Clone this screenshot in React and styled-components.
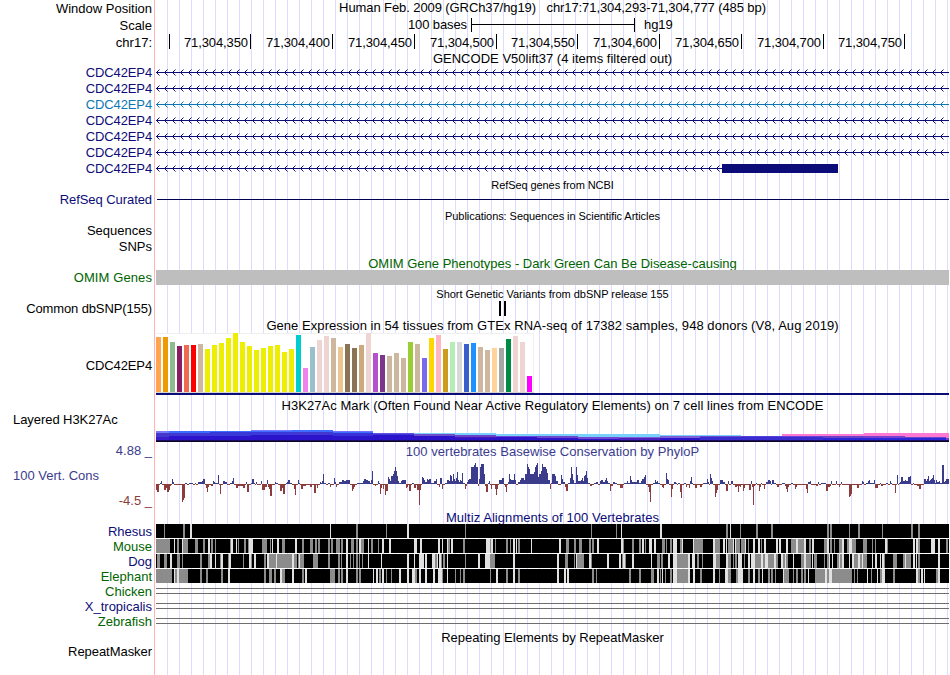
import React from 'react';
import styled, { createGlobalStyle } from 'styled-components';

const GlobalStyle = createGlobalStyle`
    body {
        margin: 0;
        background: #fff;
    }
`;

const navy = '#0c0c78';
const black = '#000';
const green = '#006400';
const consUp = '#3c3c8c';
const consDown = '#8c3c3c';

const Browser = styled.main`
    width: 949px;
    height: 675px;
    overflow: hidden;
    font-family: 'Liberation Sans', Arial, sans-serif;
    font-size: 13px;
    line-height: 15px;
    color: #000;
    background:
        linear-gradient(#ffb4b4, #ffb4b4) 154px 0 / 1px 100% no-repeat,
        linear-gradient(#fff, #fff) 0 0 / 156px 100% no-repeat,
        repeating-linear-gradient(to right, transparent 0 11px, #dcdcff 11px 12px);
`;

const Row = styled.div`
    display: grid;
    grid-template-columns: 156px 793px;
    height: ${(props) => props.$h}px;
`;

const Side = styled.div`
    display: flex;
    flex-direction: column;
`;

const Label = styled.div`
    margin-top: ${(props) => props.$top || 0}px;
    padding: ${(props) => (props.$left ? '0 0 0 13px' : '0 4px 0 0')};
    text-align: ${(props) => (props.$left ? 'left' : 'right')};
    letter-spacing: ${(props) => props.$track || 0}px;
    color: ${(props) => props.$color || black};
    white-space: pre;
`;

const Title = styled.div`
    margin-top: ${(props) => props.$top || 0}px;
    font-size: ${(props) => (props.$small ? 11 : 13)}px;
    letter-spacing: ${(props) => props.$track || 0}px;
    text-align: center;
    color: ${(props) => props.$color || black};
    white-space: pre;
`;

const Plot = styled.svg`
    display: block;
    width: 793px;
    height: ${(props) => props.$h}px;
    shape-rendering: crispEdges;
`;

const ScaleBar = styled.div`
    display: grid;
    grid-template-columns: 315px 164px 1fr;
    padding-top: 1px;
    height: 14px;
`;

const ScaleText = styled.span`
    text-align: ${(props) => props.$align};
    padding: ${(props) => (props.$align === 'right' ? '0 4px 0 0' : '0 0 0 9px')};
    letter-spacing: -0.1px;
    line-height: 13px;
`;

const ScaleLine = styled.div`
    border: solid #000;
    border-width: 0 1px;
    background: linear-gradient(#000, #000) 0 6px / 100% 1px no-repeat;
`;

const Ruler = styled.div`
    display: grid;
    grid-template-columns: 14px 81px 82px 82px 82px 81px 82px 82px 82px 81px;
    padding-top: 1px;
`;

const Tick = styled.span`
    height: 15px;
    border-right: 1px solid #000;
    text-align: right;
    padding-right: 2px;
    letter-spacing: -0.1px;
    line-height: 17px;
`;

const positions = ['', '71,304,350', '71,304,400', '71,304,450', '71,304,500', '71,304,550', '71,304,600', '71,304,650', '71,304,700', '71,304,750'];

const genes = [{ color: navy }, { color: navy }, { color: '#0c78b4' }, { color: navy }, { color: navy }, { color: navy }, { color: navy, end: 566 }];

const Gene = ({ color, end = 793 }) => {
    const arrows = [];
    for (let x = 1; x < end; x += 8) {
        arrows.push(x);
    }
    return (
        <Row $h={16}>
            <Label $color={color} $track={-0.12}>CDC42EP4</Label>
            <Plot $h={16} viewBox='0 0 793 16' fill={color}>
                <rect x='0' y='7' width={end} height='1' />
                {arrows.map((x) => (
                    <g key={x}>
                        <path d={`M${x} 6h1v1h-1zM${x + 1} 5h1v1h-1zM${x} 8h1v1h-1zM${x + 1} 9h1v1h-1z`} />
                        <path opacity='0.5' d={`M${x + 2} 4h1v1h-1zM${x + 2} 10h1v1h-1z`} />
                    </g>
                ))}
                {end < 793 && <rect x='566' y='3' width='116' height='9' />}
            </Plot>
        </Row>
    );
};

// one entry per tissue: bar height, colour
const tissues = [
    [55, '#ffa54f'], [55, '#ee9a00'], [50, '#8fbc8f'], [46, '#8b1c62'], [47, '#ee6a50'], [47, '#ff0000'], [48, '#cdb79e'],
    [43, '#eeee00'], [47, '#eeee00'], [49, '#eeee00'], [54, '#eeee00'], [59, '#eeee00'], [50, '#eeee00'], [46, '#eeee00'],
    [42, '#eeee00'], [44, '#eeee00'], [46, '#eeee00'], [47, '#eeee00'], [40, '#eeee00'], [43, '#eeee00'],
    [57, '#00cdcd'], [24, '#ee82ee'], [45, '#9ac0cd'], [52, '#eed5d2'], [56, '#eed5d2'], [54, '#cdb79e'], [45, '#eec591'],
    [48, '#8b7355'], [44, '#8b7355'], [47, '#cdaa7d'], [59, '#eed5d2'], [39, '#b452cd'], [37, '#7a378b'], [36, '#cdb79e'],
    [39, '#cdb79e'], [34, '#cdb79e'], [50, '#9acd32'], [48, '#cdb79e'], [34, '#7a67ee'], [54, '#ffd700'], [57, '#ffb6c1'],
    [43, '#cd9b1d'], [50, '#b4eeb4'], [50, '#d9d9d9'], [48, '#3a5fcd'], [49, '#1e90ff'], [45, '#cdb79e'], [42, '#cdb79e'],
    [44, '#ffd39b'], [44, '#a6a6a6'], [53, '#008b45'], [56, '#eed5d2'], [50, '#eed5d2'], [16, '#ff00ff'],
];

// [start, [top, colour], ...] overlaid signal of the cell lines, each step runs to the next start
const h3k27ac = [
    [156, [18, '#7878f8'], [20, '#4638cc'], [24, '#3a1ccc']],
    [169, [18, '#3c6cff'], [20, '#4038d0'], [23, '#2c14cc']],
    [210, [18, '#3c6cff'], [19, '#3838d8'], [23, '#2c14cc']],
    [251, [17, '#7878ff'], [18, '#3c6cff'], [19, '#3a38d8'], [22, '#2c14cc']],
    [292, [17, '#3c6cff'], [19, '#4038d0'], [22, '#2c14cc']],
    [333, [18, '#7070ff'], [19, '#3c6cff'], [20, '#3a30d8'], [23, '#2c14cc']],
    [373, [20, '#6050e8'], [21, '#4038d0'], [22, '#2c14cc']],
    [414, [20, '#78d0ff'], [21, '#7050c8'], [23, '#2c14cc']],
    [455, [20, '#78d0ff'], [22, '#6a44c8'], [24, '#4a18b8'], [25, '#2c14cc']],
    [496, [21, '#78d0ff'], [23, '#7048d0'], [24, '#2c14cc']],
    [537, [21, '#78d0ff'], [23, '#7048d0'], [25, '#2c14cc']],
    [578, [21, '#78d0ff'], [24, '#7048d0'], [26, '#2c14cc']],
    [619, [21, '#78d0ff'], [24, '#7c60d8'], [25, '#4c20c0']],
    [660, [22, '#78d0ff'], [23, '#7c60d8'], [25, '#2c14cc']],
    [700, [22, '#78d0ff'], [23, '#6a4cd0'], [24, '#3a2cd0']],
    [741, [23, '#5040d8'], [24, '#3a2cd0']],
    [782, [21, '#ff78d2'], [23, '#6444d4'], [24, '#3a2cd0']],
    [823, [21, '#ff78d2'], [23, '#6a44c8'], [25, '#2c24d8']],
    [864, [20, '#ff78d2'], [23, '#7840d0'], [25, '#2c24d8']],
    [905, [20, '#ff78d2'], [24, '#6a44c8'], [25, '#2c24d8']],
    [946, [20, '#ff78d2'], [25, '#7840d0']],
];

// start, height pairs; negative heights hang below the zero line
const phyloP = [
    156, -6, 157, -8, 159, -1, 160, 1, 161, 3, 162, -1, 164, -6, 166, -4, 167, -8, 169, -6, 170, -2, 171, -1, 172, 5, 173, 2, 174, -1,
    182, -18, 183, -16, 184, -14, 185, 1, 187, -1, 189, 1, 193, -1, 195, 1, 196, -1, 198, 2, 202, 3, 203, 5, 205, -1, 206, -4, 207, -8, 208, -3,
    209, -1, 211, -2, 213, 3, 214, 2, 215, 1, 218, 9, 219, -1, 220, -10, 221, -1, 223, 3, 225, 2, 227, -1, 230, 1, 232, 3, 233, 6,
    234, -1, 236, -4, 238, -2, 243, -4, 245, -1, 246, 2, 247, -8, 249, -1, 251, 1, 252, 5, 254, 1, 255, -1, 256, 2, 257, -1, 261, 3,
    262, -6, 265, -3, 267, 4, 268, -3, 269, -5, 270, -12, 272, -1, 275, 2, 276, 1, 278, -1, 280, -7, 282, -4, 283, -10, 285, -1, 286, 1, 287, 2,
    288, 4, 290, 1, 292, -1, 294, -5, 295, -11, 296, -1, 298, 4, 299, 1, 300, -1, 301, -5, 303, -2, 306, -1, 310, -3, 312, -1, 314, -9,
    316, -1, 317, -4, 318, -1, 320, 2, 321, 1, 322, 3, 323, 10, 324, 1, 326, -1, 328, 1, 330, -3, 331, -1, 334, 6, 335, 2, 336, -3,
    337, -1, 339, 2, 342, 4, 344, 3, 346, 4, 350, -1, 352, -7, 353, -5, 354, -3, 355, -1, 357, 1, 363, 3, 364, 5, 366, 4, 368, 3,
    370, 1, 371, 4, 372, 13, 373, -1, 375, -2, 376, -1, 378, 3, 379, 1, 380, -10, 381, -4, 382, -1, 383, -5, 384, -1, 385, -11, 386, -7,
    388, 7, 389, 5, 390, 3, 391, 8, 393, 10, 394, 13, 395, 17, 396, 13, 397, 8, 398, 3, 399, 1, 401, 3, 402, 4, 406, -4, 407, -3,
    408, -1, 409, -7, 411, -1, 412, 1, 414, -4, 416, -1, 417, -6, 419, -21, 420, -6, 421, -1, 422, 7, 423, 6, 424, 4, 425, 2, 427, 5,
    428, 4, 429, 5, 431, 1, 434, 3, 436, 5, 437, -1, 439, -3, 440, 6, 442, -5, 443, -1, 445, 1, 447, 4, 449, 3, 450, 9, 451, 8,
    452, 3, 453, 10, 454, 5, 455, 3, 456, 6, 457, 12, 458, 4, 459, 2, 460, 4, 461, 3, 462, 11, 463, 1, 465, -5, 466, -2, 467, 2,
    468, 4, 469, 5, 471, 17, 474, 19, 475, 21, 476, 17, 478, -2, 479, 5, 480, 17, 481, 20, 484, 10, 485, -2, 486, -8, 488, 1, 489, 3,
    490, -1, 491, -5, 492, -1, 495, -5, 496, -11, 497, -5, 498, -1, 499, 4, 502, 6, 504, -1, 505, -3, 506, -8, 507, -1, 508, 2, 509, 10,
    510, 5, 511, 4, 514, 10, 515, 4, 516, -1, 518, 2, 520, 4, 521, 6, 524, 4, 525, 10, 527, 20, 528, 17, 529, 15, 530, 10, 534, 12,
    535, 17, 536, 19, 537, 21, 538, 7, 539, 10, 541, 13, 542, 20, 543, 17, 546, 15, 547, 11, 548, 4, 550, -5, 551, 1, 552, 10, 555, 8,
    556, 3, 558, -1, 561, 9, 562, 5, 563, 2, 565, -3, 566, -7, 568, 1, 570, 6, 571, 17, 572, 10, 573, 4, 574, 1, 576, 17, 577, 9,
    578, 3, 581, 4, 582, 6, 583, 3, 584, 8, 585, 9, 586, 13, 587, 6, 588, 1, 590, -2, 592, -1, 594, 1, 596, 2, 598, -1, 600, 3,
    601, 4, 603, 2, 605, 4, 606, 6, 607, 3, 608, 1, 610, -7, 611, -2, 613, 2, 615, 1, 617, -1, 620, -4, 623, -1, 624, 1, 627, 3,
    628, 1, 630, 8, 631, 4, 632, 2, 635, 2, 637, 4, 639, 1, 641, 3, 642, 5, 644, 7, 645, 9, 646, -1, 648, -3, 649, -8, 650, -18,
    651, -1, 653, 1, 655, 4, 656, 2, 657, 3, 658, 1, 660, -1, 662, -3, 663, -4, 664, -1, 666, 11, 667, 5, 668, 4, 669, -1, 671, -13,
    672, -5, 673, -1, 674, 2, 676, 1, 677, -1, 678, 1, 680, -8, 681, -14, 682, -1, 684, 1, 686, -3, 687, -1, 689, -4, 690, 3, 691, 7,
    692, 1, 693, -1, 695, -4, 697, -1, 700, -3, 702, -1, 703, 1, 707, 5, 708, 2, 709, -1, 710, 10, 711, 6, 712, 3, 713, -1, 715, -13,
    716, -9, 717, -6, 718, -1, 720, 4, 723, 2, 725, -1, 726, -7, 728, 3, 729, -1, 731, 3, 733, -1, 735, -3, 737, -2, 738, -8, 739, -2,
    740, -3, 741, -1, 743, -7, 744, -4, 745, -1, 749, -6, 751, 3, 752, -3, 753, -21, 754, -2, 755, -1, 756, 1, 757, -1, 759, -7, 760, -3,
    761, 1, 762, -1, 764, -5, 765, -1, 766, 2, 768, 4, 770, 3, 771, -1, 772, 4, 774, 1, 776, -1, 777, -3, 779, -1, 782, 1, 785, -2,
    786, -5, 787, -8, 788, -3, 789, -1, 791, 1, 793, -1, 795, -5, 796, -3, 797, -1, 806, -5, 807, -9, 808, 2, 810, 3, 811, -1, 816, -2,
    818, 2, 819, -1, 821, 1, 826, -7, 828, -3, 830, -2, 831, 3, 832, -1, 836, 3, 837, -1, 839, -3, 840, -1, 841, 2, 842, -1, 849, -13,
    850, -12, 851, -10, 852, -1, 857, -4, 859, -1, 862, 3, 863, 2, 864, -1, 866, 1, 868, 3, 869, 4, 870, 1, 874, 4, 875, -4, 878, -1,
    880, 1, 881, -2, 883, -1, 886, 1, 888, -1, 890, 3, 891, 1, 892, -1, 895, -9, 896, -1, 897, 9, 898, -1, 899, 1, 900, 2, 901, 7,
    903, 3, 905, 4, 906, 3, 908, 7, 910, 8, 911, -1, 913, 1, 914, -1, 917, -2, 919, -5, 921, -1, 924, 5, 926, 3, 927, 5, 928, 8,
    929, 3, 930, 4, 931, 5, 932, 6, 933, 9, 934, 4, 935, 1, 936, 4, 937, 2, 939, 3, 940, 1, 942, 19, 944, 2, 945, 3, 946, 5,
];

// start, width pairs of the partly matching and mismatching columns
const species = [
    {
        name: 'Rhesus',
        color: navy,
        gray: [164, 1, 183, 2, 356, 2, 386, 1, 465, 1, 591, 1, 616, 1, 726, 2, 740, 1, 756, 2, 771, 2, 827, 2, 830, 2, 849, 1, 858, 2, 882, 1, 911, 2, 918, 2],
        light: [190, 2, 330, 1, 407, 2, 621, 1, 660, 2, 730, 1],
    },
    {
        name: 'Mouse',
        color: green,
        gray: [
            156, 14, 177, 2, 183, 5, 195, 3, 203, 2, 211, 2, 215, 1, 230, 1, 238, 1, 244, 2, 248, 1, 262, 5, 270, 1, 282, 3, 302, 2, 310, 3,
            315, 2, 318, 2, 328, 2, 331, 2, 336, 4, 341, 2, 351, 3, 356, 2, 361, 3, 371, 2, 378, 1, 448, 2, 463, 2, 490, 1, 495, 1, 506, 2,
            510, 1, 518, 2, 566, 3, 574, 2, 579, 3, 589, 2, 592, 2, 623, 1, 632, 2, 639, 2, 645, 1, 662, 3, 666, 1, 670, 2, 680, 2, 694, 9,
            715, 5, 728, 5, 736, 4, 741, 4, 748, 1, 761, 1, 791, 5, 798, 6, 809, 2, 824, 3, 830, 2, 834, 1, 839, 3, 847, 2, 852, 4, 863, 4,
            872, 1, 875, 1, 887, 1, 918, 2, 946, 2,
        ],
        light: [
            174, 1, 182, 1, 208, 2, 231, 2, 236, 1, 249, 4, 272, 1, 277, 2, 295, 2, 346, 2, 359, 2, 368, 1, 382, 2, 389, 2, 414, 3, 420, 2,
            438, 2, 442, 1, 447, 1, 451, 2, 486, 4, 491, 2, 513, 2, 516, 1, 531, 1, 559, 2, 597, 2, 621, 2, 642, 2, 649, 3, 654, 2, 673, 4,
            682, 1, 693, 1, 713, 2, 723, 2, 726, 1, 733, 1, 735, 1, 745, 1, 753, 2, 758, 2, 764, 2, 776, 2, 779, 2, 786, 2, 796, 2, 804, 2,
            812, 2, 827, 2, 842, 2, 849, 3, 885, 2, 913, 2, 916, 2, 931, 4, 938, 2,
        ],
    },
    {
        name: 'Dog',
        color: navy,
        gray: [
            157, 3, 164, 3, 177, 3, 182, 1, 200, 2, 208, 2, 220, 1, 228, 1, 243, 1, 251, 1, 264, 2, 269, 7, 277, 15, 294, 3, 298, 1, 300, 4,
            313, 5, 328, 2, 338, 2, 341, 1, 350, 1, 353, 1, 356, 2, 359, 1, 362, 1, 435, 2, 441, 1, 443, 2, 465, 1, 490, 5, 565, 3, 574, 1,
            577, 7, 591, 1, 622, 1, 625, 1, 657, 3, 661, 2, 677, 11, 697, 2, 702, 1, 716, 4, 728, 3, 733, 1, 735, 2, 744, 1, 755, 6, 763, 2,
            768, 6, 776, 2, 783, 2, 786, 2, 801, 3, 806, 5, 814, 3, 824, 1, 827, 2, 837, 2, 840, 2, 854, 4, 860, 2, 863, 4, 884, 1, 893, 4,
            903, 2, 906, 5, 918, 2,
        ],
        light: [
            170, 2, 210, 2, 215, 1, 221, 2, 229, 2, 249, 2, 254, 2, 267, 2, 276, 1, 292, 2, 299, 1, 346, 2, 368, 1, 381, 1, 407, 2, 414, 1,
            419, 5, 425, 2, 432, 3, 437, 1, 439, 2, 447, 1, 478, 2, 485, 5, 513, 2, 557, 2, 576, 1, 589, 2, 607, 2, 619, 2, 623, 2, 632, 2,
            651, 1, 668, 2, 673, 4, 688, 2, 692, 3, 713, 3, 726, 2, 738, 4, 748, 2, 751, 4, 761, 2, 765, 3, 774, 2, 781, 2, 785, 1, 793, 1,
            804, 2, 812, 1, 829, 1, 832, 1, 839, 1, 842, 2, 849, 1, 852, 2, 858, 2, 862, 1, 872, 1, 875, 2, 880, 1, 882, 2, 905, 1, 913, 2,
            916, 1, 938, 2,
        ],
    },
    {
        name: 'Elephant',
        color: green,
        gray: [
            156, 16, 175, 2, 179, 9, 200, 2, 206, 2, 221, 2, 264, 2, 269, 3, 274, 2, 282, 3, 302, 2, 330, 5, 338, 2, 341, 2, 356, 2, 359, 2,
            379, 2, 386, 1, 391, 1, 415, 2, 442, 1, 455, 1, 460, 1, 463, 2, 490, 1, 506, 2, 518, 2, 592, 2, 596, 1, 629, 2, 639, 2, 651, 3,
            660, 1, 665, 1, 670, 2, 677, 11, 700, 2, 719, 1, 728, 3, 736, 2, 748, 2, 758, 2, 768, 2, 771, 2, 775, 1, 784, 5, 793, 1, 796, 2,
            801, 2, 804, 2, 815, 10, 827, 2, 832, 20, 854, 1, 857, 1, 871, 1, 880, 2, 893, 2, 918, 2, 936, 2,
        ],
        light: [
            174, 1, 177, 2, 228, 2, 280, 2, 292, 2, 305, 2, 346, 2, 373, 1, 376, 2, 382, 2, 399, 2, 407, 2, 412, 3, 419, 2, 425, 2, 433, 2,
            438, 4, 447, 1, 496, 2, 513, 2, 557, 2, 564, 2, 567, 2, 657, 2, 662, 1, 673, 4, 688, 2, 693, 2, 713, 2, 725, 3, 738, 5, 753, 2,
            762, 1, 783, 1, 808, 1, 825, 2, 829, 3, 867, 1, 877, 1, 882, 3, 916, 2, 921, 2, 924, 1, 938, 2,
        ],
    },
];

const unaligned = [
    { name: 'Chicken', color: green },
    { name: 'X_tropicalis', color: navy },
    { name: 'Zebrafish', color: green },
];

// plots keep window coordinates, the data area starts at 156
const columns = (pairs) => {
    let d = '';
    for (let i = 0; i < pairs.length; i += 2) {
        d += `M${pairs[i]} 0h${pairs[i + 1]}v14h-${pairs[i + 1]}z`;
    }
    return d;
};

const wiggle = (up) => {
    let d = '';
    for (let i = 0; i < phyloP.length; i += 2) {
        const v = phyloP[i + 1];
        if (v > 0 === up) {
            d += `M${phyloP[i]} 25V${25 - v}H${phyloP[i + 2] || 949}V25z`;
        }
    }
    return d;
};

const Histone = () => (
    <Plot $h={30} viewBox='156 0 793 30'>
        {h3k27ac.map(([x, ...layers], i) => {
            const end = i + 1 < h3k27ac.length ? h3k27ac[i + 1][0] : 949;
            return layers.map(([y, c]) => <rect key={`${x}-${y}`} x={x} y={y} width={end - x} height={27 - y} fill={c} />);
        })}
        <rect x='156' y='27' width='793' height='1' fill='#1c0c5c' />
        <rect x='156' y='28' width='793' height='1' fill='#0c0424' />
    </Plot>
);

const TitleRow = ({ h = 15, label, labelColor, ...rest }) => (
    <Row $h={h}>
        <Label $color={labelColor}>{label}</Label>
        <Title {...rest} />
    </Row>
);

const App = () => (
    <>
        <GlobalStyle />
        <Browser>
            <Row $h={17}>
                <Label $top={1}>Window Position</Label>
                <Title $track={-0.09}>{'Human Feb. 2009 (GRCh37/hg19)   chr17:71,304,293-71,304,777 (485 bp)'}</Title>
            </Row>
            <Row $h={16}>
                <Label $top={1}>Scale</Label>
                <ScaleBar>
                    <ScaleText $align='right'>100 bases</ScaleText>
                    <ScaleLine />
                    <ScaleText $align='left'>hg19</ScaleText>
                </ScaleBar>
            </Row>
            <Row $h={17}>
                <Label $top={2}>chr17:</Label>
                <Ruler>
                    {positions.map((p) => (
                        <Tick key={p}>{p}</Tick>
                    ))}
                </Ruler>
            </Row>
            <TitleRow $top={1} $track={0.02}>GENCODE V50lift37 (4 items filtered out)</TitleRow>
            {genes.map((g, i) => (
                <Gene key={i} {...g} />
            ))}
            <TitleRow $top={1} $small $track={-0.08}>RefSeq genes from NCBI</TitleRow>
            <Row $h={16}>
                <Label $color={navy} $track={-0.07}>RefSeq Curated</Label>
                <Plot $h={16}>
                    <rect x='1' y='7' width='792' height='1' fill='#000050' />
                </Plot>
            </Row>
            <TitleRow $top={1} $small $track={-0.06}>Publications: Sequences in Scientific Articles</TitleRow>
            <Row $h={16}>
                <Label>Sequences</Label>
            </Row>
            <Row $h={16}>
                <Label>SNPs</Label>
            </Row>
            <TitleRow $top={1} $color={green}>OMIM Gene Phenotypes - Dark Green Can Be Disease-causing</TitleRow>
            <Row $h={15}>
                <Label $color={green} $track={0.1}>OMIM Genes</Label>
                <Plot $h={15}>
                    <rect width='793' height='15' fill='#bebebe' />
                </Plot>
            </Row>
            <TitleRow $top={2} $small $track={-0.02}>Short Genetic Variants from dbSNP release 155</TitleRow>
            <Row $h={17}>
                <Label $top={1} $track={-0.12}>Common dbSNP(155)</Label>
                <Plot $h={17}>
                    <rect x='343' y='1' width='2' height='15' />
                    <rect x='348' y='1' width='2' height='15' />
                </Plot>
            </Row>
            <TitleRow h={16} $top={1} $track={0.055}>Gene Expression in 54 tissues from GTEx RNA-seq of 17382 samples, 948 donors (V8, Aug 2019)</TitleRow>
            <Row $h={64}>
                <Label $top={25} $track={-0.12}>CDC42EP4</Label>
                <Plot $h={64}>
                    <rect width='378' height='60' fill='#f0f0f0' />
                    <rect y='1' width='377' height='58' fill='#fff' />
                    <rect y='59' width='378' height='1' fill='#d3d3d3' />
                    {tissues.map(([h, c], i) => (
                        <rect key={i} x={i * 7} y={59 - h} width='5' height={h} fill={c} />
                    ))}
                    <rect y='60' width='793' height='2' fill={navy} />
                </Plot>
            </Row>
            <TitleRow h={16} $top={1} $track={0.05}>H3K27Ac Mark (Often Found Near Active Regulatory Elements) on 7 cell lines from ENCODE</TitleRow>
            <Row $h={30}>
                <Label $top={-1} $left $track={-0.06}>Layered H3K27Ac</Label>
                <Histone />
            </Row>
            <TitleRow h={16} $top={1} $track={0.03} label='4.88 _' labelColor={consUp} $color={consUp}>100 vertebrates Basewise Conservation by PhyloP</TitleRow>
            <Row $h={51}>
                <Side>
                    <Label $top={9} $left $color={consUp}>100 Vert. Cons</Label>
                    <Label $top={10} $color={consDown}>-4.5 _</Label>
                </Side>
                <Plot $h={51} viewBox='156 0 793 51'>
                    <path d={wiggle(true)} fill={consUp} />
                    <path d={wiggle(false)} fill={consDown} />
                </Plot>
            </Row>
            <TitleRow h={14} $track={0.06} $color={navy}>Multiz Alignments of 100 Vertebrates</TitleRow>
            {species.map((s) => (
                <Row key={s.name} $h={15}>
                    <Label $color={s.color}>{s.name}</Label>
                    <Plot $h={15} viewBox='156 0 793 15'>
                        <rect x='156' width='793' height='14' />
                        <path d={columns(s.gray)} fill='#8c8c8c' />
                        <path d={columns(s.light)} fill='#e1e1e1' />
                    </Plot>
                </Row>
            ))}
            {unaligned.map((s) => (
                <Row key={s.name} $h={15}>
                    <Label $color={s.color}>{s.name}</Label>
                    <Plot $h={15} fill='#6e6e6e'>
                        <rect y='4' width='793' height='1' />
                        <rect y='9' width='793' height='1' />
                    </Plot>
                </Row>
            ))}
            <TitleRow h={16} $top={1}>Repeating Elements by RepeatMasker</TitleRow>
            <Row $h={30}>
                <Label $top={-1} $track={-0.05}>RepeatMasker</Label>
            </Row>
        </Browser>
    </>
);

export default App;
